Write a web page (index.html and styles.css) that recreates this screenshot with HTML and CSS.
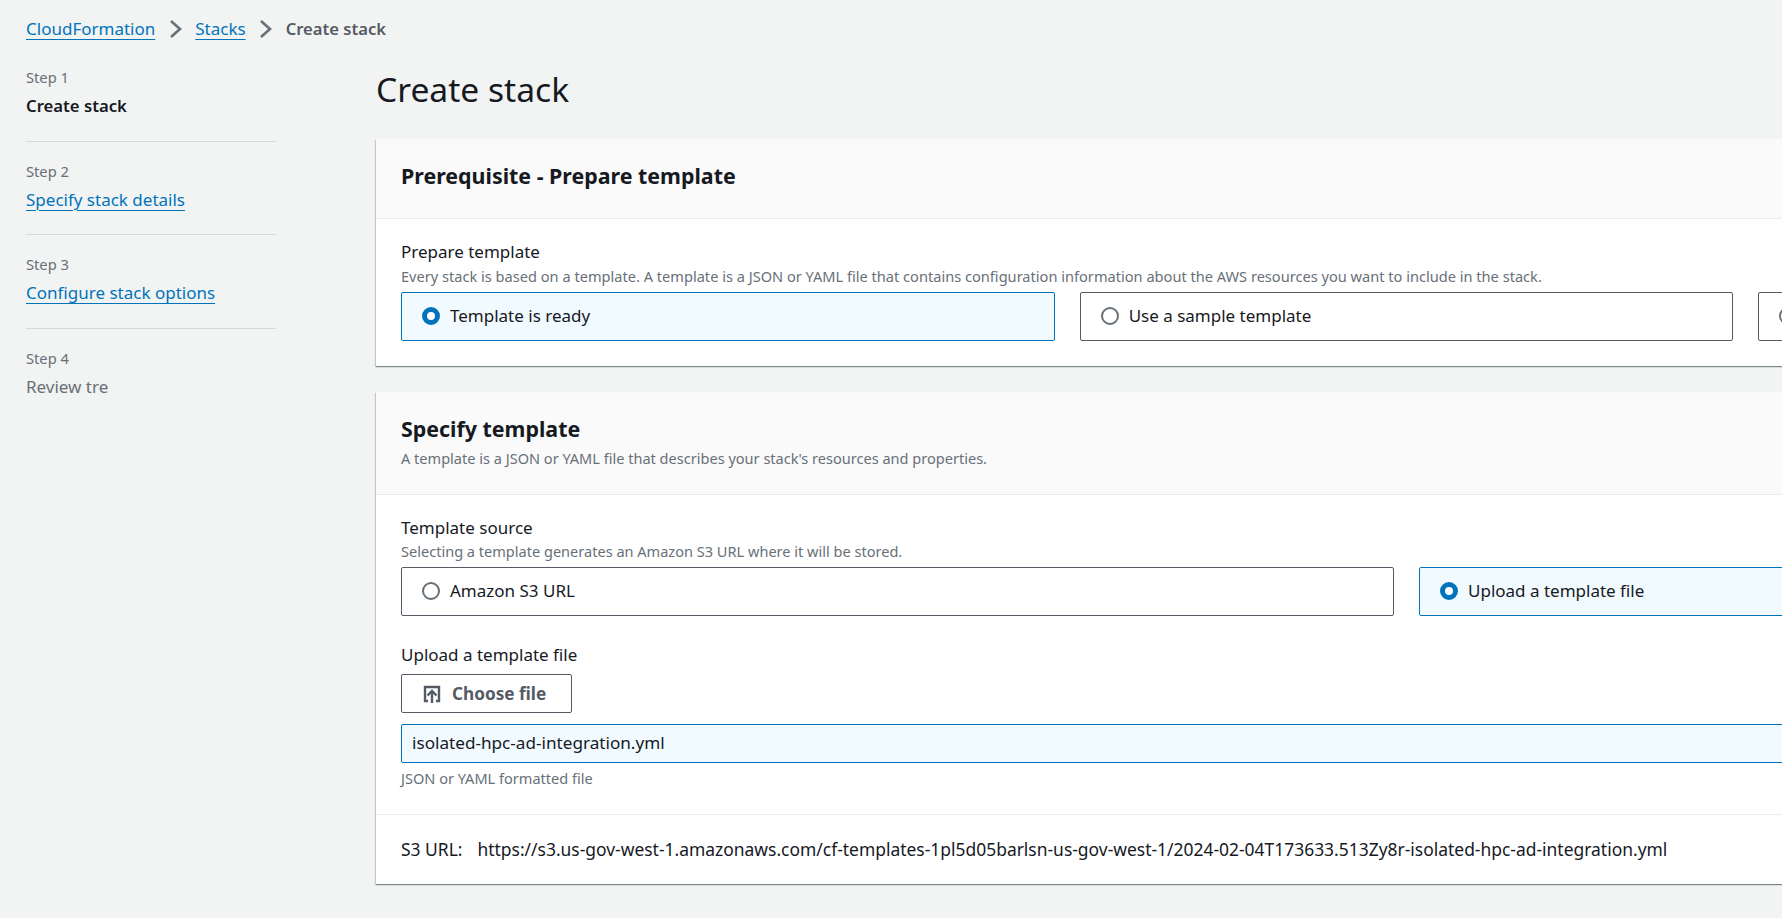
FILE: index.html
```html
<!DOCTYPE html>
<html lang="en">
<head>
    <meta charset="UTF-8">
    <meta name="viewport" content="width=device-width, initial-scale=1.0">
    <title>Create stack</title>
    <link rel="stylesheet" href="styles.css">
</head>
<body>
    <nav class="breadcrumbs">
        <a href="#">CloudFormation</a>
        <svg class="crumb-arrow" viewBox="0 0 13 20"><path d="M2 2l9 8-9 8"/></svg>
        <a href="#">Stacks</a>
        <svg class="crumb-arrow" viewBox="0 0 13 20"><path d="M2 2l9 8-9 8"/></svg>
        <span class="crumb-current">Create stack</span>
    </nav>

    <div class="layout">
        <ol class="steps">
            <li class="step">
                <small>Step 1</small>
                <strong>Create stack</strong>
            </li>
            <li class="step">
                <small>Step 2</small>
                <a href="#">Specify stack details</a>
            </li>
            <li class="step">
                <small>Step 3</small>
                <a href="#">Configure stack options</a>
            </li>
            <li class="step">
                <small>Step 4</small>
                <span class="step-disabled">Review tre</span>
            </li>
        </ol>

        <main class="content">
            <h1>Create stack</h1>

            <section class="card">
                <header class="card-header">
                    <h2>Prerequisite - Prepare template</h2>
                </header>
                <div class="card-body">
                    <div class="field-label">Prepare template</div>
                    <div class="field-desc prepare-desc">Every stack is based on a template. A template is a JSON or YAML file that contains configuration information about the AWS resources you want to include in the stack.</div>
                    <div class="tiles tiles-3">
                        <label class="tile selected"><span class="radio"></span>Template is ready</label>
                        <label class="tile"><span class="radio"></span>Use a sample template</label>
                        <label class="tile"><span class="radio"></span></label>
                    </div>
                </div>
            </section>

            <section class="card">
                <header class="card-header with-desc">
                    <h2>Specify template</h2>
                    <div class="field-desc">A template is a JSON or YAML file that describes your stack's resources and properties.</div>
                </header>
                <div class="card-body source-body">
                    <div class="field-label">Template source</div>
                    <div class="field-desc">Selecting a template generates an Amazon S3 URL where it will be stored.</div>
                    <div class="tiles tiles-2">
                        <label class="tile"><span class="radio"></span>Amazon S3 URL</label>
                        <label class="tile selected"><span class="radio"></span>Upload a template file</label>
                    </div>
                    <div class="field-label upload-label">Upload a template file</div>
                    <button class="upload-btn" type="button">
                        <svg viewBox="0 0 18 18"><path d="M5 16H2V2h14v14h-3"/><path d="M4.500 10.500L9 6l4.500 4.500M9 6v12"/></svg>
                        Choose file
                    </button>
                    <div class="file-name">isolated-hpc-ad-integration.yml</div>
                    <div class="field-desc file-hint">JSON or YAML formatted file</div>
                </div>
                <div class="card-footer">
                    <span>S3 URL:</span>
                    <span>https://s3.us-gov-west-1.amazonaws.com/cf-templates-1pl5d05barlsn-us-gov-west-1/2024-02-04T173633.513Zy8r-isolated-hpc-ad-integration.yml</span>
                </div>
            </section>
        </main>
    </div>
</body>
</html>
```

FILE: styles.css
```css
html, body {
    height: 100%;
    overflow: hidden;
}

body {
    margin: 0;
    background-color: #f2f3f3;
    color: #16191f;
    font-family: "Noto Sans", sans-serif;
    font-size: 17px;
    line-height: 22px;
}

a {
    color: #0073bb;
    text-decoration: underline;
    text-decoration-thickness: 1px;
    text-underline-offset: 4px;
}

.breadcrumbs {
    display: flex;
    align-items: center;
    gap: 13.5px;
    height: 22px;
    padding: 18px 26px 0;
}

.crumb-arrow {
    width: 13px;
    height: 20px;
    fill: none;
    stroke: #687078;
    stroke-width: 2.6;
}

.crumb-current {
    color: #545b64;
    font-size: 16.6px;
    font-weight: 600;
}

.layout {
    display: flex;
    margin-top: 8px;
    padding-left: 26px;
}

.steps {
    flex: none;
    width: 250px;
    margin: 0 100px 0 0;
    padding: 0;
    list-style: none;
}

.step {
    display: flex;
    flex-direction: column;
    box-sizing: border-box;
    height: 93.5px;
    border-bottom: 1px solid #d5dbdb;
}

.step:last-child {
    border-bottom: none;
}

.step small {
    margin: 19px 0 8px;
    color: #687078;
    font-size: 14.7px;
    line-height: 20px;
}

.step strong {
    font-size: 16.7px;
    font-weight: 600;
}

.step-disabled {
    color: #687078;
}

.content {
    flex: none;
    width: 2061px;
}

h1 {
    margin: 19px 0 28px;
    font-size: 33.6px;
    font-weight: 400;
    line-height: 44px;
}

.card {
    margin-bottom: 26px;
    background-color: #fff;
    box-shadow: 0 1px 1px 0 rgba(0, 28, 36, 0.3), 1px 1px 1px 0 rgba(0, 28, 36, 0.15), -1px 1px 1px 0 rgba(0, 28, 36, 0.15);
}

.card-header {
    padding: 20px 25px 25px;
    background-color: #fafafa;
    border-bottom: 1px solid #eaeded;
}

.card-header.with-desc {
    padding-bottom: 27px;
}

.card-header .field-desc {
    margin-top: 3px;
}

h2 {
    margin: 0;
    font-size: 21.4px;
    font-weight: 700;
    line-height: 34px;
}

.card-body {
    padding: 22px 25px 25px;
}

.source-body {
    padding-bottom: 27px;
}

.field-label {
    margin-bottom: 4px;
}

.source-body .field-label {
    margin-bottom: 3px;
}

.field-desc {
    color: #687078;
    font-size: 14.55px;
    line-height: 18px;
}

.prepare-desc {
    font-size: 14.6px;
}

.tiles {
    display: grid;
    gap: 25px;
    margin-top: 7px;
}

.tiles-3 {
    grid-template-columns: repeat(3, 1fr);
}

.tiles-2 {
    grid-template-columns: repeat(2, 1fr);
}

.tile {
    display: flex;
    align-items: center;
    box-sizing: border-box;
    height: 49px;
    padding: 0 0 1px 20px;
    background-color: #fff;
    border: 1px solid #545b64;
    border-radius: 2px;
}

.tile.selected {
    background-color: #f1faff;
    border-color: #0073bb;
}

.radio {
    flex: none;
    box-sizing: border-box;
    width: 18px;
    height: 18px;
    margin-right: 10px;
    border: 2px solid #687078;
    border-radius: 50%;
}

.selected .radio {
    background-color: #fff;
    border: 5px solid #0073bb;
}

.source-body .upload-label {
    margin-top: 28px;
    margin-bottom: 8px;
}

.upload-btn {
    display: flex;
    align-items: center;
    gap: 11px;
    box-sizing: border-box;
    width: 171px;
    height: 39px;
    padding: 0 21px;
    background-color: #fff;
    border: 1px solid #545b64;
    border-radius: 2px;
    color: #545b64;
    font-family: inherit;
    font-size: 17.2px;
    font-weight: 700;
}

.upload-btn svg {
    flex: none;
    width: 18px;
    height: 18px;
    fill: none;
    stroke: #545b64;
    stroke-width: 2.4;
}

.file-name {
    box-sizing: border-box;
    height: 39px;
    margin-top: 11px;
    padding: 7px 10px;
    background-color: #f1faff;
    border: 1px solid #0073bb;
    border-radius: 2px;
    font-size: 17.15px;
}

.file-hint {
    margin-top: 6px;
}

.card-footer {
    display: flex;
    gap: 15px;
    padding: 23px 25px 24px;
    border-top: 1px solid #eaeded;
    font-size: 17.45px;
}
```
